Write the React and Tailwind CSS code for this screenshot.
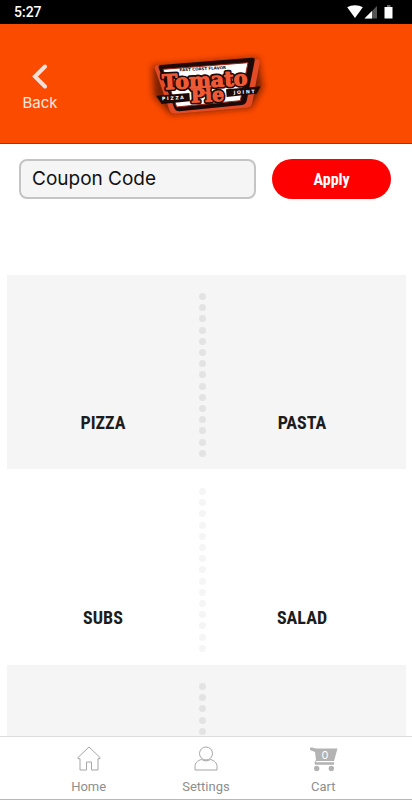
import { useState } from 'react';

const menuRows = [
  { left: 'PIZZA', right: 'PASTA', shaded: true },
  { left: 'SUBS', right: 'SALAD', shaded: false },
  { left: '', right: '', shaded: true },
];

export default function App() {
  return (
    <div className="flex h-screen flex-col bg-white font-['Inter',sans-serif]">
      <StatusBar />
      <Header />
      <main className="flex-1 overflow-hidden">
        <CouponForm />
        <div className="mt-[76px] flex flex-col gap-px pr-1.5 pl-[7px]">
          {menuRows.map((row, index) => (
            <MenuRow key={index} {...row} />
          ))}
        </div>
      </main>
      <BottomNav />
    </div>
  );
}

function StatusBar() {
  return (
    <div className="flex h-6 shrink-0 items-center justify-between bg-black pr-[18px] pl-3.5 font-['Roboto',sans-serif] text-sm font-medium text-white">
      <span>5:27</span>
      <svg width="48" height="16" viewBox="0 0 48 16" aria-hidden="true">
        <path d="M1.200 3.300C5.500 .5 12.500 .5 16.800 3.300L9 14Z" fill="#fff" />
        <path d="M31 2v12.500H18.500Z" fill="#555" />
        <path d="M26 7v7.500h-7.500Z" fill="#fff" />
        <path d="M41 1h3.500v2H41z" fill="#666" />
        <path d="M38.500 3H46.500v11.500h-8z" fill="#fff" />
      </svg>
    </div>
  );
}

function Header() {
  return (
    <header className="grid h-[120px] shrink-0 grid-cols-[1fr_130px_1fr] items-center border-b border-[#f01000] bg-[#fa4b00]">
      <button className="mt-2 ml-[22px] flex w-9 flex-col items-center gap-1 text-[15px] leading-5 text-[#fbe9e2]">
        <svg width="18" height="26" viewBox="0 0 18 26" fill="none" stroke="#f0e0d8" strokeWidth="4" aria-hidden="true">
          <path d="M14 3.500 4 13.500l10 10" strokeLinecap="round" strokeLinejoin="miter" />
        </svg>
        Back
      </button>
      <Logo />
    </header>
  );
}

function Logo() {
  return (
    <svg width="130" height="80" viewBox="0 0 390 240" className="mt-1" role="img" aria-label="Tomato Pie Pizza Joint">
      <defs>
        <filter id="shadow" x="-20%" y="-20%" width="140%" height="140%">
          <feGaussianBlur stdDeviation="10" />
        </filter>
      </defs>
      <path d="M35 60 350 35 365 125 330 185 90 205 38 150Z" fill="#5a1500" opacity=".8" filter="url(#shadow)" />
      <path d="M41 66q-1-7 7-8L347 40q11 0 9 10l-22 120q-3 14-17 15L103 203q-14 0-18-12Z" fill="#e34a26" />
      <path d="M53 66q-2-8 6-9L333 35q10 0 8 9l-24 121q-3 11-14 12L115 196q-11 0-15-10Z" fill="#1d0907" />
      <path d="M66 70 321 50 298 164 107 183Z" fill="#fff" stroke="#9a2412" strokeWidth="3" />
      <path d="M45 149 145 141 147 166 62 174Z" fill="#1d0907" />
      <path d="M255 130 359 121 347 143 257 153Z" fill="#1d0907" />
      <g transform="rotate(-3 195 120)" textAnchor="middle">
        <g className="fill-[#ee5a35] font-['DejaVu_Serif'] font-bold" strokeLinejoin="round" paintOrder="stroke">
          <text x="198" y="167" className="stroke-[#1d0907] text-[56px]" strokeWidth="13">Pie</text>
          <text x="192" y="124" className="stroke-[#1d0907] text-[62px]" strokeWidth="13">Tomato</text>
          <text x="198" y="167" className="stroke-[#ee5a35] text-[56px]" strokeWidth="3">Pie</text>
          <text x="192" y="124" className="stroke-[#ee5a35] text-[62px]" strokeWidth="3">Tomato</text>
        </g>
        <text x="188" y="72" className="fill-[#1d0907] font-['DejaVu_Sans'] text-[12px] font-bold">EAST COAST FLAVOR</text>
        <text x="94" y="156" className="fill-white font-['DejaVu_Sans'] text-[14px] font-bold">P I Z Z A</text>
        <text x="308" y="149" className="fill-white font-['DejaVu_Sans'] text-[14px] font-bold">J O I N T</text>
      </g>
    </svg>
  );
}

function CouponForm() {
  const [code, setCode] = useState('');

  return (
    <form className="grid grid-cols-[2fr_1fr] gap-4 pt-[15px] pr-[21px] pl-[19px]" onSubmit={(e) => e.preventDefault()}>
      <input
        type="text"
        aria-label="Coupon Code"
        placeholder="Coupon Code"
        value={code}
        onChange={(e) => setCode(e.target.value)}
        className="h-10 min-w-0 rounded-lg border-2 border-[#c4c4c4] bg-[#f5f5f5] px-[11px] pb-0.5 text-[19px] text-black placeholder:text-[#111] placeholder:opacity-100"
      />
      <button className="h-10 rounded-full bg-[#ff0000] pt-0.5 font-['Roboto_Condensed','Roboto',sans-serif] text-base font-bold text-white">
        Apply
      </button>
    </form>
  );
}

function MenuRow({ left, right, shaded }) {
  return (
    <section className={`flex h-[194px] pr-2 ${shaded ? 'bg-[#f5f5f5]' : 'bg-white'}`}>
      <MenuLink label={left} />
      <div className="flex flex-col justify-between pt-[18px] pb-3">
        {Array.from({ length: 15 }, (_, i) => (
          <span key={i} className={`size-[7px] rounded-full ${shaded ? 'bg-[#e3e3e3]' : 'bg-[#f5f5f5]'}`} />
        ))}
      </div>
      <MenuLink label={right} />
    </section>
  );
}

function MenuLink({ label }) {
  if (!label) return <div className="flex-1" />;

  return (
    <a
      href="#"
      className="flex flex-1 items-end justify-center pb-8 font-['Roboto_Condensed','Roboto',sans-serif] text-lg leading-7 font-bold text-[#1c1c1c]"
    >
      {label}
    </a>
  );
}

function BottomNav() {
  return (
    <nav className="grid h-16 shrink-0 grid-cols-3 border-t border-b border-t-[#dcdcdc] border-b-[#b8b8b8] bg-white px-[30px]">
      <NavItem label="Home">
        <path d="M12 1 1 11.500v1.200h2V24h6.500v-8h5v8h6.500V12.700h2v-1.200Z" />
      </NavItem>
      <NavItem label="Settings">
        <circle cx="12" cy="7.500" r="6.500" />
        <path d="M7.500 13.500C3.500 14.500 1 17 1 20.500V24h22v-3.500c0-3.500-2.500-6-6.500-7-2.500 1.800-6.500 1.800-9 0Z" />
      </NavItem>
      <NavItem label="Cart">
        <g className="fill-[#b3b3b3]" stroke="none">
          <path d="M-1 2.500 0 1.300 5 2.500H26.500L23 15H5.500L4.800 16.200H23V18.700H4L3.500 16.500 5 14 4 6-1 4Z" />
          <circle cx="5.700" cy="22.500" r="2.700" />
          <circle cx="20.300" cy="22.500" r="2.700" />
          <text x="14" y="12.500" textAnchor="middle" className="fill-white font-['Inter'] text-[11px]">0</text>
        </g>
      </NavItem>
    </nav>
  );
}

function NavItem({ label, children }) {
  return (
    <a href="#" className="flex flex-col items-center gap-2 pt-[9px] font-['Roboto',sans-serif] text-[13px] leading-4 text-[#8e8e8e]">
      <svg width="24" height="25" viewBox="0 0 24 25" fill="none" stroke="#a6a6a6" className="overflow-visible" aria-hidden="true">
        {children}
      </svg>
      {label}
    </a>
  );
}
